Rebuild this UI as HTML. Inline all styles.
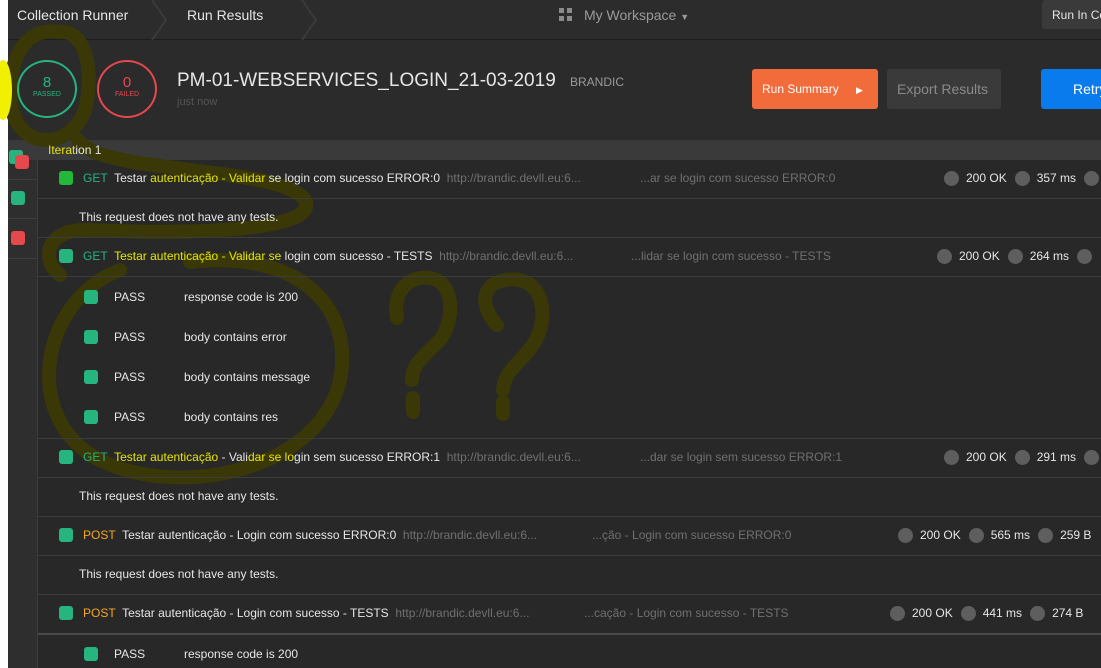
<!DOCTYPE html>
<html><head><meta charset="utf-8"><style>
*{margin:0;padding:0;box-sizing:border-box}
body{width:1101px;height:668px;overflow:hidden;background:#282828;font-family:"Liberation Sans",sans-serif;position:relative;color:#e6e6e6}
.a{position:absolute;white-space:nowrap}
.sq{position:absolute;width:14px;height:14px;border-radius:3px;background:#26b47f}
.dot{display:inline-block;width:15px;height:15px;border-radius:50%;background:#5e5e5e;vertical-align:middle;margin:0 7px 0 8px}
.line{position:absolute;left:38px;right:0;height:1px;background:#3c3c3c}
.t{font-size:12px;color:#e6e6e6}
.g{color:#26b47f}.o{color:#f4a623}.y{color:#e6e600}
.u{color:#707070}
.st{font-size:12px;color:#e6e6e6}
</style></head><body>
<div class="a" style="left:0;top:0;width:1101px;height:40px;background:#2c2c2c;border-bottom:1px solid #1e1e1e"></div>
<div class="a" style="left:0;top:0;width:8px;height:668px;background:#fff"></div>
<div class="a" style="left:8px;top:40px;width:1093px;height:100px;background:#2b2b2b"></div>
<div class="a" style="left:8px;top:140px;width:1093px;height:20px;background:#3a3a3a"></div>
<div class="a" style="left:8px;top:160px;width:30px;height:508px;background:#2e2e2e;border-right:1px solid #3c3c3c"></div>
<div class="a" style="left:8px;top:179px;width:30px;height:1px;background:#3e3e3e"></div>
<div class="a" style="left:8px;top:218px;width:30px;height:1px;background:#3e3e3e"></div>
<div class="a" style="left:8px;top:258px;width:30px;height:1px;background:#3e3e3e"></div>
<svg class="a" style="left:0;top:0" width="1101" height="668">
<g fill="none" stroke="#3a3806" stroke-width="14" stroke-linecap="round" stroke-linejoin="round">
<path d="M60,32 C20,25 5,70 12,110 C22,150 70,150 85,110 C95,70 85,30 60,32"/>
<path d="M78,140 C100,175 280,165 305,200 C320,230 200,235 90,230 C45,228 40,260 60,275"/>
<path d="M120,270 C40,300 20,420 100,460 C180,500 320,470 340,380 C355,300 290,250 190,262"/>
<path d="M397,318 C392,290 410,275 430,278 C455,282 455,320 440,340 C420,360 412,365 412,380"/>
<path d="M413,398 L413,412"/>
<path d="M497,325 C482,310 478,285 505,280 C535,275 548,300 540,330 C530,360 505,365 503,390"/>
<path d="M503,402 L503,414"/>
</g>
<ellipse cx="3" cy="90" rx="9" ry="30" fill="#f0f000"/>
</svg>
<div class="a" style="left:17px;top:7px;font-size:14px;color:#e6e6e6">Collection Runner</div>
<div class="a" style="left:187px;top:7px;font-size:14px;color:#e6e6e6">Run Results</div>
<svg class="a" style="left:150px;top:0" width="20" height="40"><path d="M2,0 L16,20 L2,40" fill="none" stroke="#3a3a3a" stroke-width="2"/></svg>
<svg class="a" style="left:300px;top:0" width="20" height="40"><path d="M2,0 L16,20 L2,40" fill="none" stroke="#3a3a3a" stroke-width="2"/></svg>
<div class="a" style="left:559px;top:8px;width:13px;height:13px;background:linear-gradient(#8a8a8a 0 5px,transparent 5px 8px,#8a8a8a 8px),#2c2c2c;"></div>
<div class="a" style="left:564px;top:8px;width:3px;height:13px;background:#2c2c2c"></div>
<div class="a" style="left:584px;top:7px;font-size:14px;color:#9a9a9a">My Workspace <span style="font-size:9px">▼</span></div>
<div class="a" style="left:1042px;top:0;width:70px;height:29px;background:#3a3a3a;border-radius:3px;font-size:12px;padding:8px 10px;color:#e6e6e6">Run In Co</div>
<div class="a" style="left:17px;top:60px;width:60px;height:58px;border:2px solid #26b47f;border-radius:50%;text-align:center;color:#26b47f"><div style="font-size:15px;margin-top:12px">8</div><div style="font-size:7px">PASSED</div></div>
<div class="a" style="left:97px;top:60px;width:60px;height:58px;border:2px solid #e5484d;border-radius:50%;text-align:center;color:#e5484d"><div style="font-size:15px;margin-top:12px">0</div><div style="font-size:7px">FAILED</div></div>
<div class="a" style="left:177px;top:70px;font-size:19px;color:#e6e6e6">PM-01-WEBSERVICES_LOGIN_21-03-2019</div>
<div class="a" style="left:570px;top:75px;font-size:12px;color:#9a9a9a">BRANDIC</div>
<div class="a" style="left:177px;top:96px;font-size:11px;color:#555">just now</div>
<div class="a" style="left:752px;top:69px;width:126px;height:40px;background:#f26b3a;border-radius:3px;font-size:12px;color:#fff;padding:13px 10px">Run Summary <span style="margin-left:14px;font-size:9px">▶</span></div>
<div class="a" style="left:887px;top:69px;width:114px;height:40px;background:#3a3a3a;border-radius:3px;font-size:14px;color:#8a8a8a;padding:12px 10px">Export Results</div>
<div class="a" style="left:1041px;top:69px;width:70px;height:40px;background:#097bed;border-radius:3px;font-size:14px;color:#fff;padding:12px 32px">Retry</div>
<div class="a" style="left:48px;top:143px;font-size:12px;color:#e6e6e6"><span class="y">Iterat</span>ion 1</div>
<div class="sq" style="left:9px;top:150px"></div><div class="sq" style="left:15px;top:155px;background:#e5484d"></div>
<div class="sq" style="left:11px;top:191px"></div>
<div class="sq" style="left:11px;top:231px;background:#e5484d"></div>
<div class="line" style="top:198px"></div><div class="line" style="top:237px"></div><div class="line" style="top:276px"></div>
<div class="line" style="top:438px"></div><div class="line" style="top:477px"></div><div class="line" style="top:516px"></div>
<div class="line" style="top:555px"></div><div class="line" style="top:594px"></div><div class="line" style="top:633px;background:#4a4a4a;height:2px"></div>
<div class="sq" style="left:59px;top:171px;background:#22b83a"></div>
<div class="a t" style="left:83px;top:171px"><span class="g">GET</span>&nbsp; Testar <span class="y">autenticação - Validar</span> se login com sucesso ERROR:0 &nbsp;<span class="u">http://brandic.devll.eu:6...</span></div>
<div class="a t u" style="left:640px;top:171px">...ar se login com sucesso ERROR:0</div>
<div class="a st" style="left:936px;top:171px"><span class="dot"></span>200 OK<span class="dot"></span>357 ms<span class="dot"></span></div>
<div class="a t" style="left:79px;top:210px">This request does not have any tests.</div>
<div class="sq" style="left:59px;top:249px"></div>
<div class="a t" style="left:83px;top:249px"><span class="g">GET</span>&nbsp; <span class="y">Testar autenticação - Validar se</span> login com sucesso - TESTS &nbsp;<span class="u">http://brandic.devll.eu:6...</span></div>
<div class="a t u" style="left:631px;top:249px">...lidar se login com sucesso - TESTS</div>
<div class="a st" style="left:929px;top:249px"><span class="dot"></span>200 OK<span class="dot"></span>264 ms<span class="dot"></span></div>
<div class="sq" style="left:84px;top:290px"></div><div class="a t" style="left:114px;top:290px">PASS</div><div class="a t" style="left:184px;top:290px">response code is 200</div>
<div class="sq" style="left:84px;top:330px"></div><div class="a t" style="left:114px;top:330px">PASS</div><div class="a t" style="left:184px;top:330px">body contains error</div>
<div class="sq" style="left:84px;top:370px"></div><div class="a t" style="left:114px;top:370px">PASS</div><div class="a t" style="left:184px;top:370px">body contains message</div>
<div class="sq" style="left:84px;top:410px"></div><div class="a t" style="left:114px;top:410px">PASS</div><div class="a t" style="left:184px;top:410px">body contains res</div>
<div class="sq" style="left:59px;top:450px"></div>
<div class="a t" style="left:83px;top:450px"><span class="g">GET</span>&nbsp; <span class="y">Testar autenticação</span> - Vali<span class="y">dar se lo</span>gin sem sucesso ERROR:1 &nbsp;<span class="u">http://brandic.devll.eu:6...</span></div>
<div class="a t u" style="left:640px;top:450px">...dar se login sem sucesso ERROR:1</div>
<div class="a st" style="left:936px;top:450px"><span class="dot"></span>200 OK<span class="dot"></span>291 ms<span class="dot"></span></div>
<div class="a t" style="left:79px;top:489px">This request does not have any tests.</div>
<div class="sq" style="left:59px;top:528px"></div>
<div class="a t" style="left:83px;top:528px"><span class="o">POST</span>&nbsp; Testar autenticação - Login com sucesso ERROR:0 &nbsp;<span class="u">http://brandic.devll.eu:6...</span></div>
<div class="a t u" style="left:592px;top:528px">...ção - Login com sucesso ERROR:0</div>
<div class="a st" style="left:890px;top:528px"><span class="dot"></span>200 OK<span class="dot"></span>565 ms<span class="dot"></span>259 B</div>
<div class="a t" style="left:79px;top:567px">This request does not have any tests.</div>
<div class="sq" style="left:59px;top:606px"></div>
<div class="a t" style="left:83px;top:606px"><span class="o">POST</span>&nbsp; Testar autenticação - Login com sucesso - TESTS &nbsp;<span class="u">http://brandic.devll.eu:6...</span></div>
<div class="a t u" style="left:584px;top:606px">...cação - Login com sucesso - TESTS</div>
<div class="a st" style="left:882px;top:606px"><span class="dot"></span>200 OK<span class="dot"></span>441 ms<span class="dot"></span>274 B</div>
<div class="sq" style="left:84px;top:647px"></div><div class="a t" style="left:114px;top:647px">PASS</div><div class="a t" style="left:184px;top:647px">response code is 200</div>
</body></html>
